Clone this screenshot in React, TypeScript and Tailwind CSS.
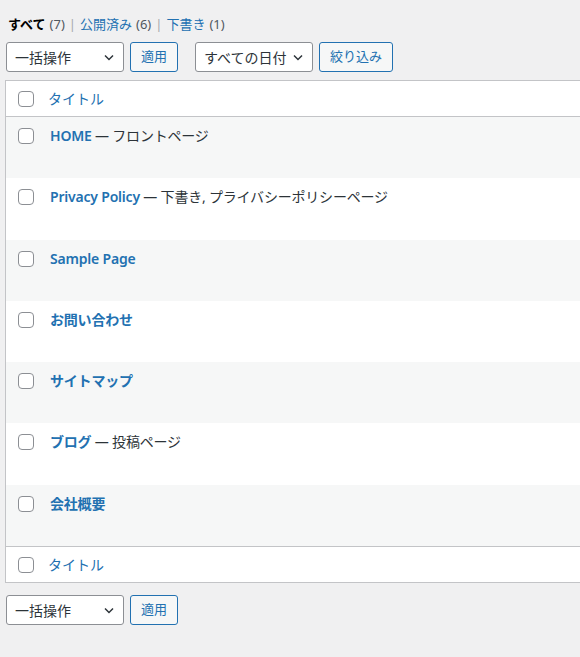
import React from "react";

const font = { fontFamily: '"Noto Sans", "Noto Sans CJK JP", sans-serif' };

function Checkbox() {
  return <span className="block w-4 h-4 rounded-[4px] border border-[#8c8f94] bg-white shrink-0" />;
}

function Chevron() {
  return (
    <svg width="16" height="16" viewBox="0 0 20 20" className="shrink-0">
      <path d="M5 8l5 5 5-5" fill="none" stroke="#2c3338" strokeWidth="1.8" />
    </svg>
  );
}

function Select({ label, w }: { label: string; w: string }) {
  return (
    <div className={`${w} h-[30px] flex items-center justify-between border border-[#8c8f94] rounded-[3px] bg-white pl-[8px] pr-[6px] text-[14px] text-[#2c3338]`}>
      <span>{label}</span>
      <Chevron />
    </div>
  );
}

function Btn({ label, w }: { label: string; w: string }) {
  return (
    <div className={`${w} h-[30px] flex items-center justify-center border border-[#2271b1] rounded-[3px] bg-[#f6f7f7] text-[13px] text-[#2271b1]`}>
      {label}
    </div>
  );
}

const rows: { title: string; state?: string }[] = [
  { title: "HOME", state: "フロントページ" },
  { title: "Privacy Policy", state: "下書き, プライバシーポリシーページ" },
  { title: "Sample Page" },
  { title: "お問い合わせ" },
  { title: "サイトマップ" },
  { title: "ブログ", state: "投稿ページ" },
  { title: "会社概要" },
];

export default function App() {
  return (
    <div className="w-[580px] h-[657px] bg-[#f0f0f1] overflow-hidden" style={font}>
      <div className="pl-[8px] pt-[15px] h-[20px] flex items-center text-[13px] text-[#50575e] box-content">
        <span className="font-bold text-[#000]">すべて</span>
        <span className="ml-[4px]">(7)</span>
        <span className="mx-[4px] text-[#a7aaad]">|</span>
        <span className="text-[#2271b1]">公開済み</span>
        <span className="ml-[4px]">(6)</span>
        <span className="mx-[4px] text-[#a7aaad]">|</span>
        <span className="text-[#2271b1]">下書き</span>
        <span className="ml-[4px]">(1)</span>
      </div>
      <div className="flex items-center pl-[6px] mt-[7px]">
        <Select label="一括操作" w="w-[118px]" />
        <div className="ml-[6px]"><Btn label="適用" w="w-[48px]" /></div>
        <div className="ml-[17px]"><Select label="すべての日付" w="w-[118px]" /></div>
        <div className="ml-[6px]"><Btn label="絞り込み" w="w-[74px]" /></div>
      </div>
      <div className="ml-[5px] mt-[8px] border border-r-0 border-[#c3c4c7] bg-white">
        <div className="h-[36px] flex items-center border-b border-[#c3c4c7] pl-[12px]">
          <Checkbox />
          <span className="ml-[14px] text-[14px] text-[#2271b1]">タイトル</span>
        </div>
        {rows.map((r, i) => (
          <div key={i} className={`h-[61.3px] flex items-start pt-[11px] pl-[12px] ${i % 2 === 0 ? "bg-[#f6f7f7]" : "bg-white"}`}>
            <Checkbox />
            <span className="ml-[16px] -mt-[2px] text-[14px] leading-[20px] text-[#2c3338] tracking-[-0.2px]">
              <span className="font-semibold text-[#2271b1]">{r.title}</span>
              {r.state && <span> — {r.state}</span>}
            </span>
          </div>
        ))}
        <div className="h-[36px] flex items-center border-t border-[#c3c4c7] pl-[12px]">
          <Checkbox />
          <span className="ml-[14px] text-[14px] text-[#2271b1]">タイトル</span>
        </div>
      </div>
      <div className="flex items-center pl-[6px] mt-[12px]">
        <Select label="一括操作" w="w-[118px]" />
        <div className="ml-[6px]"><Btn label="適用" w="w-[48px]" /></div>
      </div>
    </div>
  );
}
